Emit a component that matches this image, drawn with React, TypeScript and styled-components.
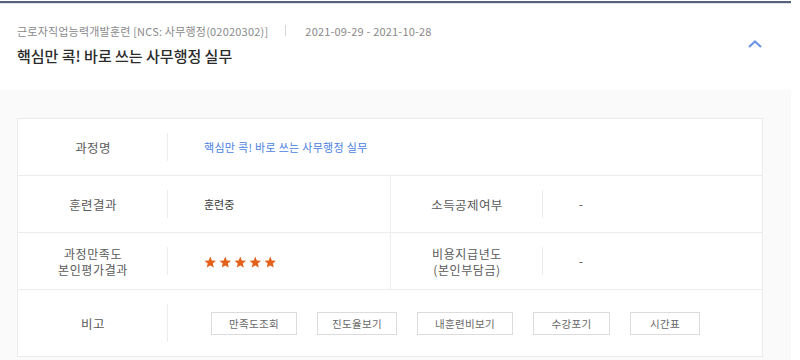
import React from "react";
import styled, { createGlobalStyle } from "styled-components";

const Global = createGlobalStyle`
  html, body { margin: 0; padding: 0; background: #ffffff; }
  body { font-family: "Noto Sans CJK KR", "Noto Sans", sans-serif; }
  * { box-sizing: border-box; }
`;

const Page = styled.div`
  width: 791px;
  height: 360px;
  margin-top: 1px;
  border-top: 2px solid #56627a;
  background: #fafafa;
  display: flex;
  flex-direction: column;
  overflow: hidden;
`;

const Header = styled.div`
  height: 87px;
  background: #ffffff;
  border-top: 1px solid #dfe2e8;
  display: flex;
  align-items: center;
  justify-content: space-between;
  padding: 0 26px 6px 17px;
`;

const HeaderText = styled.div`
  display: flex;
  flex-direction: column;
  gap: 7px;
`;

const Meta = styled.div`
  display: flex;
  align-items: center;
  font-size: 11px;
  letter-spacing: 0.2px;
  color: #8a8a8a;
  line-height: 16px;
`;

const Sep = styled.span`
  width: 1px;
  height: 11px;
  background: #d6d6d6;
  margin: 0 19px 0 17px;
`;

const Title = styled.div`
  font-size: 15px;
  font-weight: 500;
  letter-spacing: 0;
  color: #2b2b2b;
  line-height: 20px;
`;

const Toggle = styled.button`
  border: none;
  background: none;
  padding: 0;
  width: 20px;
  height: 14px;
  display: flex;
  align-items: center;
  justify-content: center;
  cursor: pointer;
`;

const Body = styled.div`
  padding: 28px 28px 0 17px;
`;

const Table = styled.div`
  background: #ffffff;
  border: 1px solid #ebebeb;
`;

const Row = styled.div<{ $h: number; $last?: boolean }>`
  display: grid;
  grid-template-columns: 150px 222px 153px 1fr;
  height: ${(p) => p.$h}px;
  border-bottom: ${(p) => (p.$last ? "none" : "1px solid #ededed")};
`;

const Label = styled.div<{ $divider?: boolean }>`
  position: relative;
  display: flex;
  flex-direction: column;
  align-items: center;
  justify-content: center;
  text-align: center;
  font-size: 12.5px;
  letter-spacing: 0.4px;
  line-height: 15px;
  color: #5a5a5a;
  ${(p) => (p.$divider ? "border-left: 1px solid #ededed;" : "")}
  &::after {
    content: "";
    position: absolute;
    right: 0;
    top: 14px;
    bottom: 14px;
    width: 1px;
    background: #ececec;
  }
`;

const Line = styled.span`
  display: block;
  font-size: 12px;
  letter-spacing: 0.6px;
  line-height: 17px;
  height: 17px;
  & + & {
    margin-top: -1px;
  }
`;

const Value = styled.div<{ $span?: number; $pad?: number; $color?: string; $ls?: number }>`
  grid-column: span ${(p) => p.$span ?? 1};
  display: flex;
  align-items: center;
  padding-left: ${(p) => p.$pad ?? 36}px;
  font-size: 11px;
  letter-spacing: ${(p) => p.$ls ?? 0}px;
  color: ${(p) => p.$color ?? "#3a3a3a"};
`;

const Stars = styled.div`
  display: flex;
  gap: 2.5px;
  margin-top: 1px;
`;

const Buttons = styled.div`
  display: flex;
  gap: 20px;
`;

const Btn = styled.button<{ $w: number }>`
  width: ${(p) => p.$w}px;
  height: 23px;
  background: #ffffff;
  border: 1px solid #dcdcdc;
  font-family: inherit;
  font-size: 10.5px;
  letter-spacing: 0.3px;
  color: #666;
  padding: 0;
  cursor: pointer;
`;

const Star = () => (
  <svg width="12.5" height="12" viewBox="0 0 24 23">
    <path
      d="M12 1 L15 8.6 L23 9.2 L16.9 14.4 L18.8 22.3 L12 18 L5.2 22.3 L7.1 14.4 L1 9.2 L9 8.6 Z"
      fill="#e2621b"
    />
  </svg>
);

const buttons: [string, number][] = [
  ["만족도조회", 86],
  ["진도율보기", 80],
  ["내훈련비보기", 96],
  ["수강포기", 77],
  ["시간표", 70],
];

export default function App() {
  return (
    <>
      <Global />
      <Page>
        <Header>
          <HeaderText>
            <Meta>
              <span>근로자직업능력개발훈련 [NCS: 사무행정(02020302)]</span>
              <Sep />
              <span>2021-09-29 - 2021-10-28</span>
            </Meta>
            <Title>핵심만 콕! 바로 쓰는 사무행정 실무</Title>
          </HeaderText>
          <Toggle aria-label="접기">
            <svg width="16" height="10" viewBox="0 0 16 10">
              <path d="M2 8 L8 2.5 L14 8" fill="none" stroke="#6b94e8" strokeWidth="2.2" />
            </svg>
          </Toggle>
        </Header>
        <Body>
          <Table>
            <Row $h={57}>
              <Label>과정명</Label>
              <Value $span={3} $color="#4b7fe2" $ls={0.3}>
                핵심만 콕! 바로 쓰는 사무행정 실무
              </Value>
            </Row>
            <Row $h={57}>
              <Label>훈련결과</Label>
              <Value>훈련중</Value>
              <Label $divider>소득공제여부</Label>
              <Value>-</Value>
            </Row>
            <Row $h={57}>
              <Label>
                <Line>과정만족도</Line>
                <Line>본인평가결과</Line>
              </Label>
              <Value>
                <Stars>
                  <Star />
                  <Star />
                  <Star />
                  <Star />
                  <Star />
                </Stars>
              </Value>
              <Label $divider>
                <Line>비용지급년도</Line>
                <Line>(본인부담금)</Line>
              </Label>
              <Value>-</Value>
            </Row>
            <Row $h={66} $last>
              <Label>비고</Label>
              <Value $span={3} $pad={43}>
                <Buttons>
                  {buttons.map(([t, w]) => (
                    <Btn key={t} $w={w}>
                      {t}
                    </Btn>
                  ))}
                </Buttons>
              </Value>
            </Row>
          </Table>
        </Body>
      </Page>
    </>
  );
}
